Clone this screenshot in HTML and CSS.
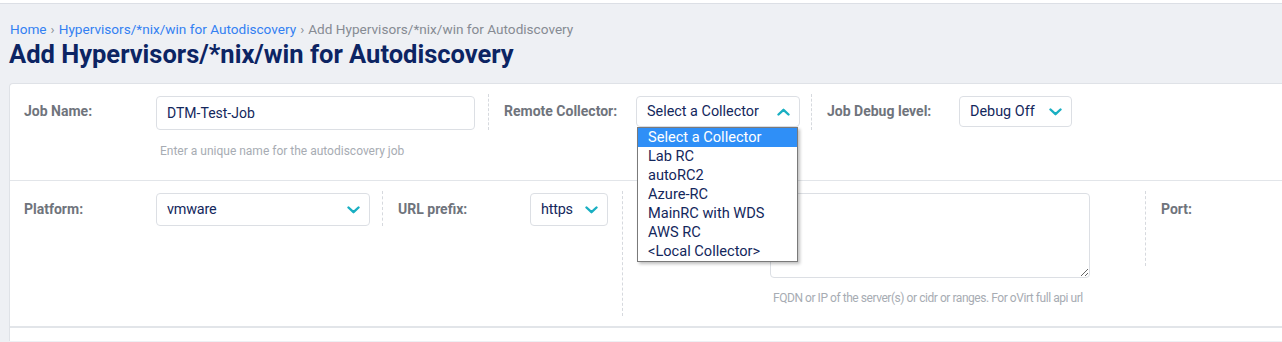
FILE: index.html
```html
<!DOCTYPE html>
<html lang="en">
<head>
<meta charset="utf-8">
<title>Add Hypervisors/*nix/win for Autodiscovery</title>
<link rel="stylesheet" href="styles.css">
</head>
<body>
<div class="topbar"></div>
<header class="page-head">
  <nav class="crumbs">
    <a href="#">Home</a><span class="sep-ch">›</span><a href="#">Hypervisors/*nix/win for Autodiscovery</a><span class="sep-ch">›</span><span class="current">Add Hypervisors/*nix/win for Autodiscovery</span>
  </nav>
  <h1 class="title">Add Hypervisors/*nix/win for Autodiscovery</h1>
</header>
<main class="card">
  <div class="row row-1">
    <div class="field f-job">
      <label class="lbl">Job Name:</label>
      <div class="ctl">
        <div class="input w-job">DTM-Test-Job</div>
        <div class="hint">Enter a unique name for the autodiscovery job</div>
      </div>
    </div>
    <div class="field f-rc dashed">
      <label class="lbl">Remote Collector:</label>
      <div class="ctl drop-host">
        <div class="select w-rc">
          <span>Select a Collector</span>
          <svg class="chev" width="13" height="8" viewBox="0 0 13 8"><path d="M1.5 6.5 L6.5 1.8 L11.5 6.5" fill="none" stroke="#19afc2" stroke-width="2.4" stroke-linecap="round" stroke-linejoin="round"/></svg>
        </div>
        <ul class="dropdown">
          <li class="active">Select a Collector</li>
          <li>Lab RC</li>
          <li>autoRC2</li>
          <li>Azure-RC</li>
          <li>MainRC with WDS</li>
          <li>AWS RC</li>
          <li>&lt;Local Collector&gt;</li>
        </ul>
      </div>
    </div>
    <div class="field f-debug dashed">
      <label class="lbl">Job Debug level:</label>
      <div class="ctl">
        <div class="select w-debug">
          <span>Debug Off</span>
          <svg class="chev" width="13" height="8" viewBox="0 0 13 8"><path d="M1.5 1.5 L6.5 6.2 L11.5 1.5" fill="none" stroke="#19afc2" stroke-width="2.4" stroke-linecap="round" stroke-linejoin="round"/></svg>
        </div>
      </div>
    </div>
  </div>
  <div class="row row-2">
    <div class="field f-platform">
      <label class="lbl">Platform:</label>
      <div class="ctl">
        <div class="select tall w-platform">
          <span>vmware</span>
          <svg class="chev" width="13" height="8" viewBox="0 0 13 8"><path d="M1.5 1.5 L6.5 6.2 L11.5 1.5" fill="none" stroke="#19afc2" stroke-width="2.4" stroke-linecap="round" stroke-linejoin="round"/></svg>
        </div>
      </div>
    </div>
    <div class="field f-url dashed">
      <label class="lbl">URL prefix:</label>
      <div class="ctl">
        <div class="select tall w-url">
          <span>https</span>
          <svg class="chev" width="13" height="8" viewBox="0 0 13 8"><path d="M1.5 1.5 L6.5 6.2 L11.5 1.5" fill="none" stroke="#19afc2" stroke-width="2.4" stroke-linecap="round" stroke-linejoin="round"/></svg>
        </div>
      </div>
    </div>
    <div class="field f-host dashed">
      <span class="lbl" aria-hidden="true"></span>
      <div class="ctl">
        <textarea class="textarea" aria-label="Host(s)"></textarea>
        <div class="hint narrow">FQDN or IP of the server(s) or cidr or ranges. For oVirt full api url</div>
      </div>
    </div>
    <div class="field f-port dashed">
      <label class="lbl">Port:</label>
    </div>
  </div>
  <div class="row row-3"></div>
</main>
</body>
</html>
```

FILE: styles.css
```css
* { box-sizing: border-box; }
html, body { margin: 0; padding: 0; }
body {
  width: 1282px;
  height: 342px;
  overflow: hidden;
  background: #eef0f4;
  font-family: Roboto, "Liberation Sans", Arial, sans-serif;
  color: #13275c;
}
.topbar {
  height: 4px;
  background: #fff;
  border-bottom: 1px solid #dcdfe5;
}
.page-head {
  padding: 17px 0 0 10px;
  height: 79px;
}
.crumbs {
  font-size: 13.6px;
  line-height: 17px;
  color: #8b9098;
  white-space: nowrap;
}
.crumbs a { color: #3380f2; text-decoration: none; }
.sep-ch { margin: 0 4px; color: #8b9098; }
.current { color: #868b93; }
.title {
  margin: 1px 0 0 -1px;
  font-size: 25.5px;
  line-height: 30px;
  font-weight: 700;
  color: #0c2463;
  white-space: nowrap;
}
.card {
  margin-left: 9px;
  background: #fff;
  border: 1px solid #dfe2e7;
  border-right: 0;
  border-bottom: 0;
  border-radius: 4px 0 0 0;
  height: 258px;
  overflow: hidden;
}
.row {
  display: flex;
  align-items: flex-start;
  border-bottom: 1px solid #e2e5e9;
}
.row-1 { height: 97px; padding-top: 10px; }
.row-2 { height: 146px; padding-top: 10px; }
.field {
  flex: none;
  display: flex;
  align-items: flex-start;
  padding-left: 15px;
}
.field.dashed { border-left: 1px dashed #d6d9de; }
.lbl {
  flex: 0 0 132px;
  font-size: 14px;
  line-height: 20px;
  font-weight: 700;
  color: #6f747c;
  padding-top: 7px;
  white-space: nowrap;
}
.f-job { width: 478px; padding-left: 14px; }
.f-rc { width: 323px; height: 36px; }
.f-debug { width: 300px; height: 36px; }
.f-platform { width: 372px; padding-left: 14px; }
.f-url { width: 240px; height: 35px; }
.f-host { width: 523px; height: 125px; }
.f-port { width: 120px; height: 75px; }
.row-2 .lbl { padding-top: 8px; }

.ctl { position: relative; padding-top: 2px; }
.input {
  height: 34px;
  border: 1px solid #dcdfe4;
  border-radius: 4px;
  padding: 0 10px;
  font-size: 14px;
  line-height: 32px;
  color: #13275c;
}
.w-job { width: 319px; }
.hint {
  margin-top: 14px;
  padding-left: 4px;
  font-size: 12px;
  line-height: 15px;
  color: #a7acb3;
  white-space: nowrap;
}
.hint.narrow { letter-spacing: -0.45px; margin-top: 13px; padding-left: 3px; }

.select {
  display: flex;
  align-items: center;
  justify-content: space-between;
  height: 31px;
  border: 1px solid #dcdfe4;
  border-radius: 4px;
  padding: 0 9px 0 10px;
  font-size: 14.4px;
  color: #13275c;
  background: #fff;
}
.select.tall { height: 33px; }
.w-rc { width: 164px; }
.w-debug { width: 113px; }
.w-platform { width: 214px; }
.w-url { width: 78px; }
.chev { flex: none; }
.w-platform span, .w-url span { letter-spacing: -0.2px; }

.drop-host { position: relative; }
.dropdown {
  position: absolute;
  left: 1px;
  top: 33px;
  width: 161px;
  margin: 0;
  padding: 0;
  list-style: none;
  background: #fff;
  border: 1px solid #7a7a7a;
  box-shadow: 2px 2px 3px rgba(0, 0, 0, 0.25);
  z-index: 5;
}
.dropdown li {
  height: 19px;
  line-height: 19px;
  padding-left: 10px;
  font-size: 14.6px;
  color: #13275c;
  white-space: nowrap;
}
.dropdown li.active {
  background: #2f8ff7;
  color: #fff;
}
.textarea {
  display: block;
  width: 320px;
  height: 85px;
  margin: 0;
  border: 1px solid #dcdfe4;
  border-radius: 4px;
  resize: both;
  font-family: inherit;
}
```
